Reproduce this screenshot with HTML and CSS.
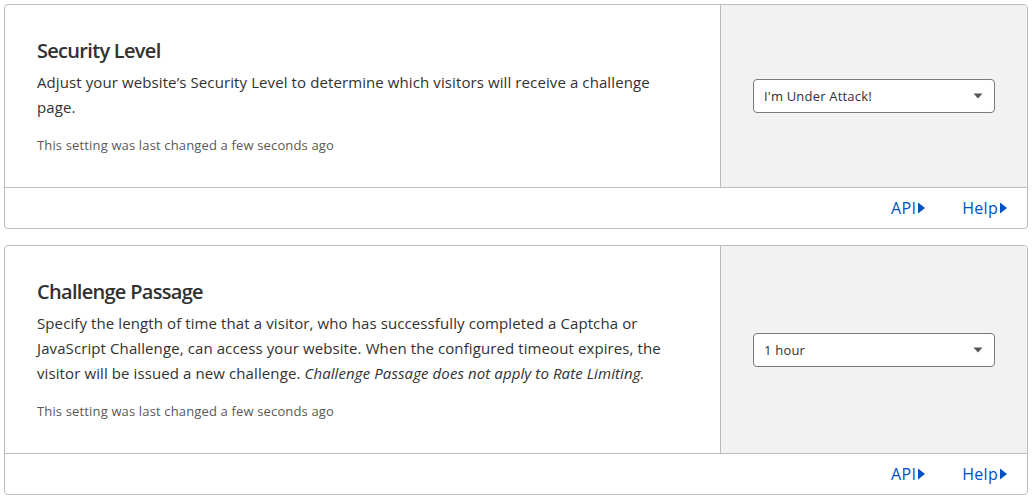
FILE: index.html
```html
<!DOCTYPE html>
<html lang="en">
<head>
<meta charset="utf-8">
<title>Settings</title>
<link rel="stylesheet" href="styles.css">
</head>
<body>
<div class="page">
  <section class="card">
    <div class="card-main">
      <div class="card-body">
        <h3 class="card-title">Security Level</h3>
        <p class="card-desc">Adjust your website’s Security Level to determine which visitors will receive a challenge page.</p>
        <p class="card-meta">This setting was last changed a few seconds ago</p>
      </div>
      <div class="card-control">
        <div class="select">
          <span class="select-value">I'm Under Attack!</span>
          <svg class="select-caret" width="10" height="6" viewBox="0 0 10 6"><path d="M0.5 0.5 H9.5 L5 5.5 Z" fill="#555"/></svg>
        </div>
      </div>
    </div>
    <div class="card-footer">
      <a class="footer-link" href="#">API<svg class="link-arrow" width="7" height="12" viewBox="0 0 7 12"><path d="M0 0.5 L7 6 L0 11.5 Z" fill="#0051c3"/></svg></a>
      <a class="footer-link" href="#">Help<svg class="link-arrow" width="7" height="12" viewBox="0 0 7 12"><path d="M0 0.5 L7 6 L0 11.5 Z" fill="#0051c3"/></svg></a>
    </div>
  </section>

  <section class="card">
    <div class="card-main">
      <div class="card-body">
        <h3 class="card-title">Challenge Passage</h3>
        <p class="card-desc">Specify the length of time that a visitor, who has successfully completed a Captcha or JavaScript Challenge, can access your website. When the configured timeout expires, the visitor will be issued a new challenge. <em>Challenge Passage does not apply to Rate Limiting.</em></p>
        <p class="card-meta">This setting was last changed a few seconds ago</p>
      </div>
      <div class="card-control">
        <div class="select">
          <span class="select-value">1 hour</span>
          <svg class="select-caret" width="10" height="6" viewBox="0 0 10 6"><path d="M0.5 0.5 H9.5 L5 5.5 Z" fill="#555"/></svg>
        </div>
      </div>
    </div>
    <div class="card-footer">
      <a class="footer-link" href="#">API<svg class="link-arrow" width="7" height="12" viewBox="0 0 7 12"><path d="M0 0.5 L7 6 L0 11.5 Z" fill="#0051c3"/></svg></a>
      <a class="footer-link" href="#">Help<svg class="link-arrow" width="7" height="12" viewBox="0 0 7 12"><path d="M0 0.5 L7 6 L0 11.5 Z" fill="#0051c3"/></svg></a>
    </div>
  </section>
</div>
</body>
</html>
```

FILE: styles.css
```css
* { box-sizing: border-box; }

html, body {
  margin: 0;
  padding: 0;
  background: #fff;
}

body {
  font-family: "Open Sans", "Noto Sans", "Liberation Sans", sans-serif;
  color: #333;
}

.page {
  padding: 4px 6px 4px 4px;
  display: flex;
  flex-direction: column;
  gap: 16px;
}

.card {
  border: 1px solid #bcbcbc;
  border-radius: 4px;
  background: #fff;
  overflow: hidden;
}

.card-main {
  display: flex;
  border-bottom: 1px solid #bcbcbc;
}

.card-body {
  flex: 1;
  padding: 32px;
}

.card-title {
  margin: 0 0 5px;
  font-size: 20px;
  line-height: 28px;
  font-weight: 600;
  color: #313131;
  letter-spacing: -0.7px;
}

.card-desc {
  margin: 0;
  font-size: 15px;
  line-height: 25px;
  color: #313131;
  letter-spacing: 0.1px;
}

.card-desc em {
  line-height: 0;
}

.card-meta {
  margin: 15px 0 0;
  font-size: 13px;
  line-height: 20px;
  color: #595959;
  letter-spacing: 0.15px;
}

.card-control {
  width: 307px;
  flex: none;
  border-left: 1px solid #bcbcbc;
  background: #f2f2f2;
  display: flex;
  align-items: center;
  justify-content: center;
}

.select {
  width: 242px;
  height: 34px;
  border: 1px solid #7a7a7a;
  border-radius: 4px;
  background: #fff;
  display: flex;
  align-items: center;
  justify-content: space-between;
  padding: 0 11px 0 10px;
  font-size: 13px;
  letter-spacing: 0.2px;
  color: #313131;
}

.select-caret {
  display: block;
}

.card-footer {
  height: 40px;
  display: flex;
  align-items: center;
  justify-content: flex-end;
  gap: 37px;
  padding-right: 20px;
}

.footer-link {
  display: inline-flex;
  align-items: center;
  gap: 2px;
  font-size: 16px;
  letter-spacing: 0.3px;
  color: #0051c3;
  text-decoration: none;
}

.link-arrow {
  display: block;
}
```
